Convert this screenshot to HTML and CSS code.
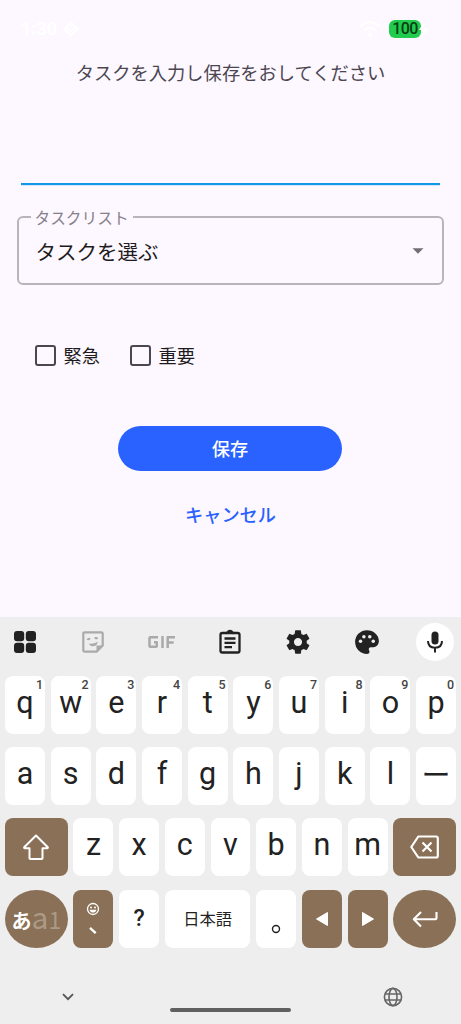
FILE: index.html
```html
<!DOCTYPE html>
<html lang="ja">
<head>
<meta charset="utf-8">
<title>タスク入力</title>
<link rel="stylesheet" href="styles.css">
</head>
<body>
<main class="screen">
  <header class="status">
    <span class="clock">1:30</span>
    <svg class="status-app" width="18" height="18" viewBox="0 0 18 18"><path d="M9 1l8 8-8 8-8-8z" fill="#fff"/><path d="M5 9l4-4 4 4-4 4zM7 7l4 4M11 7l-4 4" fill="none" stroke="#fdf7ff"/></svg>
    <svg class="wifi" width="22" height="16" viewBox="0 0 22 16"><g fill="none" stroke="#fff" stroke-width="2.4"><path d="M1 5.500Q11-3 21 5.500M5 9.500q6-5 12 0"/></g><circle cx="11" cy="13.500" r="2" fill="#fff"/></svg>
    <span class="battery">100</span>
    <svg class="bolt" width="10" height="14" viewBox="0 0 10 14"><path d="M5 0L0 8h4v6l6-8H5z" fill="#fff"/></svg>
  </header>
  <section class="form">
    <h1 class="title">タスクを入力し保存をおしてください</h1>
    <div class="task-input"></div>
    <div class="select">
      <span class="select-label">タスクリスト</span>
      <span class="select-value">タスクを選ぶ</span>
      <svg width="12" height="6" viewBox="0 0 12 6"><path d="M.5.3h11L6 5.800z" fill="#736d76"/></svg>
    </div>
    <div class="checks">
      <label class="check"><i class="box"></i>緊急</label>
      <label class="check"><i class="box"></i>重要</label>
    </div>
    <div class="save">保存</div>
    <div class="cancel">キャンセル</div>
  </section>
  <section class="keyboard">
    <div class="toolbar">
      <span class="tool"><svg width="24" height="24" viewBox="0 0 24 24" fill="#222"><rect x="1" y="1" width="10.200" height="10.200" rx="3"/><rect x="12.800" y="1" width="10.200" height="10.200" rx="3"/><rect x="1" y="12.800" width="10.200" height="10.200" rx="3"/><rect x="12.800" y="12.800" width="10.200" height="10.200" rx="3"/></svg></span>
      <span class="tool"><svg width="24" height="24" viewBox="0 0 24 24" fill="none" stroke="#aaa" stroke-width="2.200"><path d="M3.600 2.300h16.800q1.300 0 1.300 1.300v12l-6 6H3.600q-1.300 0-1.300-1.300V3.600q0-1.300 1.300-1.300z"/><path d="M15.500 22v-6.500H22z" fill="#aaa" stroke="none"/><path d="M6.300 9.800q1.300-1.700 2.700-.3M13.700 8.600q1.300-1.500 2.800.2" stroke-width="2"/><path d="M7.500 13.500q5 .8 9.300-1.800-1 4.600-4.800 4.600-2.800 0-4.500-2.800z" fill="#aaa" stroke="none"/></svg></span>
      <span class="tool"><svg width="30" height="24" viewBox="0 0 30 24" fill="none" stroke="#aaa" stroke-width="2.500" stroke-linejoin="round"><path d="M11 7.300H3.300q-.8 0-.8.800v7.800q0 .8.800.8h5.700q.8 0 .8-.8V12.200H7M15.500 6v12M20.700 18V7.300H28M20.700 12.500h6"/></svg></span>
      <span class="tool"><svg width="24" height="26" viewBox="0 0 24 26" fill="none" stroke="#222" stroke-width="2.300"><rect x="2.500" y="4" width="19" height="19.500" rx="1.800"/><path d="M8 4l1.800-.2q.3-2 2.200-2t2.200 2l1.800.2" fill="#222"/><path d="M6.500 9.500h11M6.500 13.800h11M6.500 18.200h7.500"/></svg></span>
      <span class="tool"><svg width="28" height="28" viewBox="0 0 24 24" fill="#222"><path d="M19.430 12.980c.04-.32.070-.64.070-.98s-.03-.66-.07-.98l2.110-1.650c.19-.15.240-.42.120-.64l-2-3.460c-.12-.22-.39-.3-.61-.22l-2.490 1c-.52-.4-1.080-.73-1.690-.98l-.38-2.650C14.460 2.180 14.250 2 14 2h-4c-.25 0-.46.180-.49.420l-.38 2.650c-.61.250-1.170.590-1.690.980l-2.490-1c-.23-.09-.49 0-.61.220l-2 3.460c-.13.220-.07.490.12.640l2.110 1.650c-.04.320-.07.650-.07.980s.03.660.070.980l-2.110 1.650c-.19.150-.24.420-.12.640l2 3.460c.12.220.39.300.61.220l2.490-1c.52.400 1.080.730 1.690.980l.38 2.650c.03.240.24.420.49.420h4c.25 0 .46-.18.490-.42l.38-2.650c.61-.25 1.170-.59 1.690-.98l2.490 1c.23.090.49 0 .61-.22l2-3.460c.12-.22.070-.49-.12-.64l-2.110-1.650zM12 15.500c-1.930 0-3.500-1.570-3.500-3.500s1.570-3.500 3.500-3.500 3.500 1.570 3.500 3.500-1.570 3.500-3.500 3.500z"/></svg></span>
      <span class="tool"><svg width="30" height="30" viewBox="0 0 24 24" fill="#222"><path d="M12 2.500a9.500 9.500 0 0 0 0 19c1 0 2-.7 2-1.800 0-.8-.6-1.200-.6-1.900 0-.9.700-1.600 1.600-1.600h1.500c3 0 5-2.200 5-5 0-4.900-4.300-8.700-9.500-8.700z"/><g fill="#eee"><circle cx="6.800" cy="11.300" r="1.400"/><circle cx="9.500" cy="7.800" r="1.400"/><circle cx="14.200" cy="7.800" r="1.400"/><circle cx="17" cy="11.300" r="1.400"/></g></svg></span>
      <span class="tool mic"><svg width="20" height="24" viewBox="0 0 20 24"><rect x="6.500" y="1.500" width="7" height="13" rx="3.500" fill="#222"/><path d="M3 11q0 6.700 7 6.700T17 11M10 18v4.500" fill="none" stroke="#222" stroke-width="2"/></svg></span>
    </div>
    <div class="keys">
      <div class="row top">
        <span class="key">q<sup>1</sup></span><span class="key">w<sup>2</sup></span><span class="key">e<sup>3</sup></span><span class="key">r<sup>4</sup></span><span class="key">t<sup>5</sup></span><span class="key">y<sup>6</sup></span><span class="key">u<sup>7</sup></span><span class="key">i<sup>8</sup></span><span class="key">o<sup>9</sup></span><span class="key">p<sup>0</sup></span>
      </div>
      <div class="row">
        <span class="key">a</span><span class="key">s</span><span class="key">d</span><span class="key">f</span><span class="key">g</span><span class="key">h</span><span class="key">j</span><span class="key">k</span><span class="key">l</span><span class="key dash">ー</span>
      </div>
      <div class="row">
        <span class="key brown wide"><svg width="28" height="28" viewBox="0 0 28 28" fill="none" stroke="#fff" stroke-width="2" stroke-linejoin="round"><path d="M14 2.500L2.200 14.300q-.3 1 .6 1h4.700v10q0 .8.800.8h11.400q.8 0 .8-.8v-10h4.700q.9 0 .6-1z"/></svg></span><span class="key">z</span><span class="key">x</span><span class="key">c</span><span class="key">v</span><span class="key">b</span><span class="key">n</span><span class="key">m</span><span class="key brown wide"><svg width="30" height="24" viewBox="0 0 30 24" fill="none" stroke="#fff" stroke-width="2.200" stroke-linejoin="round"><path d="M8.300 1.500H26q1.800 0 1.800 1.800v17.400q0 1.800-1.800 1.800H8.300L1.300 12zM12.500 7.500l9 9M21.500 7.500l-9 9"/></svg></span>
      </div>
      <div class="row">
        <span class="key brown wide round"><span class="mode"><b class="kana">あ</b><span class="alt">a</span><span class="alt one">1</span></span></span>
        <span class="key brown comma"><svg width="14" height="14" viewBox="0 0 14 14"><circle cx="7" cy="7" r="5.500" fill="none" stroke="#fff" stroke-width="1.300"/><circle cx="5" cy="5.500" r="1" fill="#fff"/><circle cx="9" cy="5.500" r="1" fill="#fff"/><path d="M3.500 7.800h7q-.7 2.800-3.500 2.800T3.500 7.800z" fill="#fff"/></svg><svg width="10" height="10" viewBox="0 0 10 10"><path d="M2 1.800l5.700 5.400" stroke="#fff" stroke-width="2.300"/></svg></span>
        <span class="key question">?</span>
        <span class="key space">日本語</span>
        <span class="key period"><svg width="10" height="10" viewBox="0 0 10 10"><circle cx="5" cy="5" r="3.500" fill="none" stroke="#222" stroke-width="1.400"/></svg></span>
        <span class="key brown"><svg width="14" height="16" viewBox="0 0 14 16"><path d="M12.500 1.500v13L1.500 8z" fill="#fff" stroke="#fff" stroke-linejoin="round"/></svg></span>
        <span class="key brown"><svg width="14" height="16" viewBox="0 0 14 16"><path d="M1.500 1.500v13l11-6.500z" fill="#fff" stroke="#fff" stroke-linejoin="round"/></svg></span>
        <span class="key brown wide round"><svg width="28" height="18" viewBox="0 0 28 18" fill="none" stroke="#fff" stroke-width="2.100" stroke-linejoin="round"><path d="M25.500 2v6q0 1.200-1.200 1.200H3M10 2L2.800 9.200l7.200 7.200"/></svg></span>
      </div>
    </div>
    <div class="nav">
      <svg width="14" height="10" viewBox="0 0 14 10" fill="none" stroke="#555" stroke-width="1.800"><path d="M2 2.200l5 5 5-5"/></svg>
      <i class="pill"></i>
      <svg width="20" height="20" viewBox="0 0 20 20" fill="none" stroke="#666" stroke-width="1.600"><circle cx="10" cy="10" r="8.600"/><ellipse cx="10" cy="10" rx="4" ry="8.600"/><path d="M2 7h16M2 13h16"/></svg>
    </div>
  </section>
</main>
</body>
</html>
```
FILE: styles.css
```css
* { box-sizing: border-box; }
body { margin: 0; background: #fdf7ff; font-family: Roboto, "Noto Sans CJK JP", sans-serif; color: #1e1b20; }
svg { display: block; flex: none; }
.screen { width: 461px; height: 1024px; display: flex; flex-direction: column; overflow: hidden; }
.status { height: 58px; padding: 0 32px 0 21px; display: flex; align-items: center; flex: none; }
.clock { color: #fff; font: 700 18px/20px Roboto, sans-serif; width: 41px; }
.wifi { margin-left: auto; }
.battery { width: 32px; height: 18px; margin-left: 8px; margin-right: -1px; border-radius: 6px; background: #20cb4d; color: #073b13; font: 500 16px/18px Roboto, sans-serif; text-align: center; letter-spacing: -0.6px; }
.bolt { margin-left: -1px; }
.form { height: 559px; flex: none; }
.title { margin: 0; height: 28px; font-size: 18.300px; line-height: 28px; font-weight: 400; text-align: center; color: #4b4650; font-family: "Noto Sans CJK JP", sans-serif; }
.task-input { height: 99px; margin: 0 21px; border-bottom: 2px solid #1296e9; box-shadow: 0 0 1px #1296e9; clip-path: inset(90px 0 -1px); }
.select { position: relative; margin: 31px 17px 0 16.500px; height: 69px; border: 2px solid #b9b3bb; border-radius: 6px; padding: 0 18px 0 17px; display: flex; align-items: center; justify-content: space-between; font-family: "Noto Sans CJK JP", sans-serif; }
.select-label { position: absolute; left: 12px; top: -12px; padding: 0 4px; background: #fdf7ff; color: #85808a; font-size: 15.700px; line-height: 24px; }
.select-value { font-size: 20.500px; line-height: 30px; }
.checks { display: flex; gap: 30px; margin: 55px 0 0 35px; height: 30px; }
.check { display: flex; align-items: center; gap: 7.500px; font: 18.300px/30px "Noto Sans CJK JP", sans-serif; }
.box { width: 21px; height: 21px; border: 2px solid #4b4650; border-radius: 3px; }
.save { margin: 56px auto 0 118px; width: 224px; height: 45px; border-radius: 23px; background: #2962ff; color: #fff; text-align: center; font: 500 18.200px/45px "Noto Sans CJK JP", sans-serif; }
.cancel { margin-top: 28px; text-align: center; color: #2962ff; font: 500 18.200px/30px "Noto Sans CJK JP", sans-serif; }
.keyboard { height: 407px; background: #eee; padding-top: 6px; flex: none; }
.toolbar { height: 38px; padding: 0 7px 0 6px; display: flex; justify-content: space-between; }
.tool { width: 38px; height: 38px; display: flex; align-items: center; justify-content: center; }
.mic { background: #fff; border-radius: 50%; }
.keys { padding: 15px 5px 0; display: flex; flex-direction: column; gap: 13.200px; }
.row { display: flex; gap: 5.700px; height: 58px; }
.key { position: relative; flex: 1 1 0; min-width: 0; display: flex; align-items: center; justify-content: center; background: #fff; border-radius: 8px; color: #222; font: 400 30.500px/58px Roboto, "Noto Sans CJK JP", sans-serif; padding-bottom: 5px; }
.key sup { position: absolute; right: 2px; top: 2px; font: 500 12.500px/14px Roboto, sans-serif; color: #444; }
.brown { background: #8a7056; color: #fff; padding-bottom: 0; }
.wide { flex: 0 0 62.800px; }
.round { border-radius: 50%; }
.mode { display: flex; align-items: baseline; }
.kana { font: 700 20px/30px "Noto Sans CJK JP", sans-serif; }
.alt { font: 400 30px/30px "Noto Sans CJK JP", sans-serif; color: #ab9a88; }
.one { font-size: 23px; }
.comma { flex-direction: column; padding-top: 0; gap: 10px; }
.question { font-size: 23px; font-weight: 500; padding-bottom: 0; }
.space { flex: 0 0 85.600px; font-size: 16.300px; font-family: "Noto Sans CJK JP", sans-serif; padding-bottom: 2px; }
.period { align-items: flex-end; padding-bottom: 14px; }
.dash { font-family: "Noto Sans CJK JP", sans-serif; font-size: 29px; padding-bottom: 6px; }
.nav { height: 76px; padding: 22px 58px 0 61px; display: flex; justify-content: space-between; align-items: center; }
.pill { width: 121px; height: 4px; margin: 27px 0 0 2px; border-radius: 2px; background: #606060; }
```
